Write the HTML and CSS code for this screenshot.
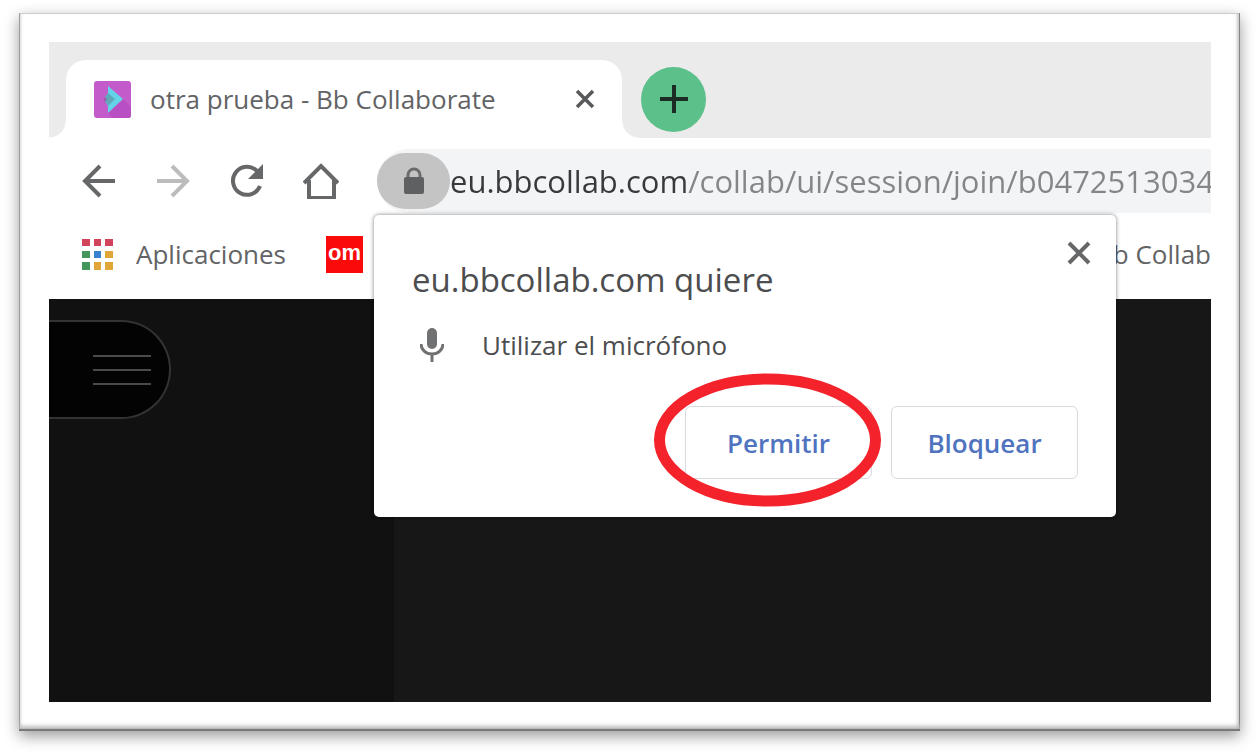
FILE: index.html
```html
<!DOCTYPE html>
<html lang="es">
<head>
  <meta charset="UTF-8" />
  <meta name="viewport" content="width=device-width, initial-scale=1" />
  <title>otra prueba - Bb Collaborate</title>
  <link rel="stylesheet" href="styles.css">
</head>
<body>
  <div class="frame">
    <div class="browser">
      <div class="tab-strip">
        <div class="tab">
          <svg class="favicon" viewBox="0 0 37 37" aria-hidden="true">
            <rect width="37" height="37" rx="3" fill="#c45bcb" />
            <path d="M14 32 29 18 37 26v8q0 3-3 3H19z" fill="#b84fc2" />
            <path d="M14 5 29 18 14 32v-7l-4-7 4-6z" fill="#63d3e8" />
            <path d="M14 12 21 18 14 25 10 18z" fill="#5fa9bb" />
            <path d="M10 16l3 2-3 4z" fill="#a45aa8" />
          </svg>
          <span class="tab-title">otra prueba - Bb Collaborate</span>
          <button class="icon-button tab-close" aria-label="Cerrar pestaña">
            <svg width="20" height="20" viewBox="0 0 20 20"><path d="M2 2l16 16M18 2L2 18" stroke="#58595b" stroke-width="3.5" /></svg>
          </button>
        </div>
        <button class="new-tab" aria-label="Nueva pestaña">
          <svg width="28" height="28" viewBox="0 0 28 28"><path d="M14 0v28M0 14h28" stroke="#1d2b25" stroke-width="4" /></svg>
        </button>
      </div>

      <div class="toolbar">
        <button class="icon-button" aria-label="Atrás">
          <svg width="36" height="36" viewBox="0 0 36 36" fill="none" stroke="#666769" stroke-width="4"><path d="M34 18H4M19 3L4 18l15 15" /></svg>
        </button>
        <button class="icon-button" aria-label="Adelante">
          <svg width="36" height="36" viewBox="0 0 36 36" fill="none" stroke="#bcbcbc" stroke-width="4"><path d="M2 18h30M17 3l15 15-15 15" /></svg>
        </button>
        <button class="icon-button" aria-label="Recargar">
          <svg width="36" height="36" viewBox="0 0 36 36">
            <path d="M31 23A14 14 0 1 1 28 8" fill="none" stroke="#666769" stroke-width="4" />
            <path d="M34 1v15H19z" fill="#666769" />
          </svg>
        </button>
        <button class="icon-button" aria-label="Inicio">
          <svg width="36" height="36" viewBox="0 0 36 36" fill="none" stroke="#666769" stroke-width="4"><path d="M1 20L18 3l17 17M6 17v18h25V17" /></svg>
        </button>
        <div class="omnibox">
          <button class="site-info" aria-label="Ver información del sitio">
            <svg width="20" height="28" viewBox="0 0 20 28">
              <path d="M4 12V8a6 6 0 0 1 12 0v4" fill="none" stroke="#6a6b6d" stroke-width="3" />
              <rect x="0" y="10" width="20" height="17" rx="2" fill="#5f6062" />
            </svg>
          </button>
          <input class="url" type="text" aria-label="Dirección" value="eu.bbcollab.com/collab/ui/session/join/b0472513034">
        </div>
      </div>

      <div class="bookmarks">
        <a class="bookmark" href="#">
          <svg width="31" height="31" viewBox="0 0 31 31" aria-hidden="true">
            <path d="M0 0h8v7H0zM12 0h7v7h-7zM23 0h8v7h-8z" fill="#d0455c" />
            <path d="M0 12h8v7H0zM0 23h8v8H0z" fill="#45965c" />
            <path d="M12 12h7v7h-7z" fill="#3a82cf" />
            <path d="M23 12h8v7h-8zM12 23h7v8h-7zM23 23h8v8h-8z" fill="#e0a638" />
          </svg>
          <span>Aplicaciones</span>
        </a>
        <a class="bookmark" href="#"><span class="om-logo">om</span></a>
        <a class="bookmark bookmark-last" href="#">Bb Collab</a>
      </div>

      <main class="page">
        <aside class="side-panel">
          <button class="menu-button" aria-label="Abrir menú">
            <svg width="58" height="32" viewBox="0 0 58 32"><path d="M0 2h58M0 16h58M0 30h58" stroke="#4a4a4a" stroke-width="2" /></svg>
          </button>
        </aside>
      </main>

      <div class="prompt" role="dialog" aria-labelledby="prompt-title">
        <button class="icon-button prompt-close" aria-label="Cerrar">
          <svg width="24" height="24" viewBox="0 0 24 24"><path d="M2 2l20 20M22 2L2 22" stroke="#666769" stroke-width="4" /></svg>
        </button>
        <h1 class="prompt-title" id="prompt-title">eu.bbcollab.com quiere</h1>
        <div class="permission">
          <svg width="24" height="34" viewBox="0 0 24 34" aria-hidden="true">
            <rect x="7" y="0" width="10" height="21" rx="5" fill="#707173" />
            <path d="M1 16a11 10 0 0 0 22 0M12 26v8" fill="none" stroke="#707173" stroke-width="3" />
          </svg>
          <span>Utilizar el micrófono</span>
        </div>
        <div class="actions">
          <div class="highlighted">
            <button class="action">Permitir</button>
            <svg class="ring" viewBox="0 0 227 134" aria-hidden="true"><ellipse cx="113.5" cy="67" rx="108" ry="61" fill="none" stroke="#f3222b" stroke-width="11" /></svg>
          </div>
          <button class="action">Bloquear</button>
        </div>
      </div>
    </div>
  </div>
</body>
</html>
```

FILE: styles.css
```css
* {
  box-sizing: border-box;
}

body {
  margin: 0;
  min-height: 100vh;
  padding: 13px 19px 25px;
  display: flex;
  background: #fff;
  font-family: "Open Sans", "Noto Sans", sans-serif;
  font-size: 26px;
  line-height: 34px;
  color: #626365;
}

button {
  font: inherit;
  padding: 0;
  cursor: pointer;
}

svg {
  display: block;
  flex: none;
}

.frame {
  flex: 1;
  min-width: 0;
  display: flex;
  padding: 29px 29px 29px 30px;
  background: #fff;
  box-shadow:
    inset 0 -2px 1px #777,
    inset 0 -6px 4px -1px #bbb,
    inset -1px 0 0 #777,
    inset -4px 0 3px -1px #ccc,
    inset 1px 0 0 #999,
    inset 3px 0 3px -1px #ddd,
    inset 0 1px 0 #ccc,
    0 5px 14px rgba(0, 0, 0, 0.4);
}

.browser {
  position: relative;
  flex: 1;
  min-width: 0;
  display: flex;
  flex-direction: column;
  overflow: hidden;
}

/* tabs */
.tab-strip {
  display: flex;
  align-items: center;
  padding: 18px 0 0 17px;
  background: #ebebeb;
}

.tab {
  position: relative;
  display: flex;
  align-items: center;
  width: 556px;
  height: 78px;
  padding: 0 27px 0 28px;
  border-radius: 20px 20px 0 0;
  background: #fff;
}

.tab::before,
.tab::after {
  content: "";
  position: absolute;
  bottom: 0;
  width: 17px;
  height: 17px;
}

.tab::before {
  right: 100%;
  background: radial-gradient(circle at 0 0, transparent 16px, #fff 17px);
}

.tab::after {
  left: 100%;
  background: radial-gradient(circle at 100% 0, transparent 16px, #fff 17px);
}

.favicon {
  width: 37px;
  height: 37px;
  margin-right: 19px;
}

.tab-title {
  flex: 1;
  white-space: nowrap;
}

.icon-button {
  border: 0;
  background: none;
}

.new-tab {
  display: flex;
  align-items: center;
  justify-content: center;
  width: 65px;
  height: 65px;
  margin-left: 19px;
  border: 0;
  border-radius: 50%;
  background: #5cc08b;
}

/* toolbar */
.toolbar {
  display: flex;
  align-items: center;
  gap: 38px;
  padding: 11px 0 0 32px;
  background: #fff;
}

.omnibox {
  flex: 1;
  min-width: 0;
  display: flex;
  align-items: center;
  height: 64px;
  border-radius: 32px 0 0 32px;
  background: #f2f4f6;
}

.site-info {
  flex: none;
  display: flex;
  align-items: center;
  justify-content: center;
  width: 73px;
  height: 56px;
  border: 0;
  border-radius: 28px;
  background: #c4c4c5;
}

/* the host is darker than the rest of the address */
.url {
  flex: 1;
  min-width: 0;
  height: 64px;
  padding: 0;
  border: 0;
  outline: 0;
  font: inherit;
  font-size: 31px;
  color: transparent;
  caret-color: #333;
  background: linear-gradient(to right, #38393b 237px, #848587 237px);
  -webkit-background-clip: text;
  background-clip: text;
}

/* bookmarks */
.bookmarks {
  display: flex;
  align-items: center;
  gap: 40px;
  height: 86px;
  padding: 0 0 4px 33px;
  background: #fff;
}

.bookmark {
  display: flex;
  align-items: center;
  gap: 23px;
  color: inherit;
  text-decoration: none;
  white-space: nowrap;
}

.bookmark-last {
  margin-left: auto;
}

.om-logo {
  width: 37px;
  height: 37px;
  background: #fb0a0a;
  color: #fff;
  font-family: "Liberation Sans", sans-serif;
  font-size: 22px;
  font-weight: bold;
  line-height: 34px;
  text-align: center;
}

/* page */
.page {
  flex: 1;
  display: flex;
  background: #171717;
}

.side-panel {
  width: 345px;
  padding-top: 21px;
  background: #111;
}

.menu-button {
  display: flex;
  align-items: center;
  justify-content: flex-end;
  width: 122px;
  height: 99px;
  padding-right: 18px;
  border: 2px solid #333;
  border-left: 0;
  border-radius: 0 50px 50px 0;
  background: #030303;
}

/* permission prompt */
.prompt {
  position: absolute;
  top: 173px;
  left: 325px;
  width: 742px;
  padding: 48px 38px 38px;
  border-radius: 5px;
  background: #fff;
  box-shadow: 0 0 4px rgba(0, 0, 0, 0.5);
}

.prompt-close {
  position: absolute;
  top: 26px;
  right: 25px;
}

.prompt-title {
  margin: 0;
  font-size: 33px;
  font-weight: normal;
  line-height: 34px;
  color: #4c4d4f;
}

.permission {
  display: flex;
  align-items: center;
  gap: 38px;
  margin-top: 31px;
  padding-left: 8px;
  color: #4c4d4f;
}

.actions {
  display: flex;
  justify-content: flex-end;
  gap: 19px;
  margin-top: 44px;
}

.action {
  width: 187px;
  height: 73px;
  border: 1px solid #d9dadc;
  border-radius: 6px;
  background: #fff;
  color: #4f73bf;
  font-weight: 600;
}

.highlighted {
  position: relative;
}

.ring {
  position: absolute;
  top: -33px;
  left: -31px;
  width: 227px;
  height: 134px;
  pointer-events: none;
}
```
